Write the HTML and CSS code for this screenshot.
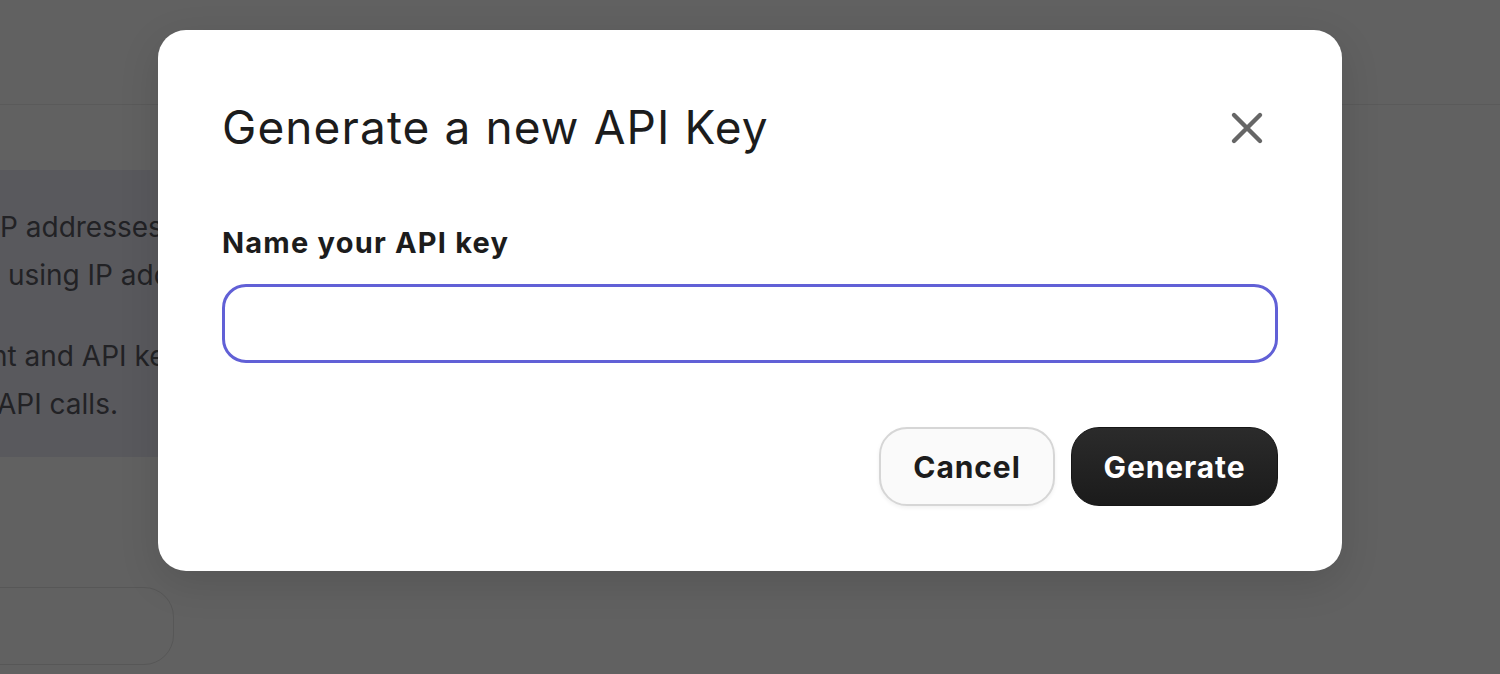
FILE: index.html
```html
<!DOCTYPE html>
<html lang="en">
<head>
<meta charset="utf-8">
<title>Generate a new API Key</title>
<link rel="stylesheet" href="styles.css">
</head>
<body>
<div class="page">
  <header class="topbar"></header>
  <main class="content">
    <section class="notice">
      <p class="notice-line">P addresses are allowed</p>
      <p class="notice-line"> using IP addresses</p>
      <p class="notice-line gap shift-a">nt and API keys</p>
      <p class="notice-line shift-b">API calls.</p>
    </section>
    <div class="ghost-input"></div>
  </main>
</div>

<div class="modal" role="dialog" aria-labelledby="modal-title">
  <div class="modal-head">
    <h1 id="modal-title" class="modal-title">Generate a new API Key</h1>
    <button class="close-btn" aria-label="Close">
      <svg width="34" height="34" viewBox="0 0 34 34" fill="none">
        <path d="M4 4 L30 30 M30 4 L4 30" stroke="#666666" stroke-width="4.4" stroke-linecap="round"/>
      </svg>
    </button>
  </div>
  <label class="field-label" for="key-name">Name your API key</label>
  <input id="key-name" class="field-input" type="text">
  <div class="actions">
    <button class="btn btn-cancel">Cancel</button>
    <button class="btn btn-generate">Generate</button>
  </div>
</div>
</body>
</html>
```

FILE: styles.css
```css
html, body {
  margin: 0;
  padding: 0;
}

body {
  width: 1500px;
  height: 674px;
  overflow: hidden;
  background: #616161;
  font-family: Inter, "Liberation Sans", sans-serif;
  position: relative;
}

.page {
  display: flex;
  flex-direction: column;
}

.topbar {
  height: 104px;
  border-bottom: 1px solid #5a5a5a;
}

.content {
  padding-top: 65px;
  display: flex;
  flex-direction: column;
}

.notice {
  width: 600px;
  height: 287px;
  background: #59595d;
  box-sizing: border-box;
  padding-top: 33px;
  color: #222225;
  font-size: 28px;
  line-height: 48px;
}

.notice-line {
  margin: 0;
  white-space: pre;
}

.notice-line.gap {
  margin-top: 33px;
}

.notice-line.shift-a {
  margin-left: -9px;
}

.notice-line.shift-b {
  margin-left: -3px;
}

.ghost-input {
  margin-top: 130px;
  margin-left: -40px;
  width: 212px;
  height: 76px;
  border: 1px solid #575757;
  border-radius: 30px;
}

.modal {
  position: absolute;
  left: 158px;
  top: 30px;
  width: 1184px;
  height: 541px;
  box-sizing: border-box;
  background: #ffffff;
  border-radius: 28px;
  box-shadow: 0 12px 40px rgba(0, 0, 0, 0.12);
  padding: 0 64px 0 64px;
  display: flex;
  flex-direction: column;
}

.modal-head {
  display: flex;
  align-items: center;
  justify-content: space-between;
  height: 196px;
}

.modal-title {
  margin: 0;
  margin-top: -2px;
  font-size: 46px;
  font-weight: 400;
  color: #1c1c1c;
  letter-spacing: 1.1px;
}

.close-btn {
  border: none;
  background: none;
  padding: 0;
  margin-right: 14px;
  width: 34px;
  height: 34px;
  display: flex;
  align-items: center;
  justify-content: center;
}

.field-label {
  font-size: 29px;
  font-weight: 700;
  color: #1c1c1c;
  line-height: 34px;
  letter-spacing: 1.2px;
}

.field-input {
  margin-top: 24px;
  height: 79px;
  box-sizing: border-box;
  border: 3px solid #6160d6;
  border-radius: 24px;
  outline: none;
  font-size: 26px;
  padding: 0 24px;
}

.actions {
  display: flex;
  justify-content: flex-end;
  gap: 16px;
  margin-top: 64px;
}

.btn {
  height: 79px;
  box-sizing: border-box;
  border-radius: 28px;
  font-family: Inter, "Liberation Sans", sans-serif;
  font-size: 30px;
  font-weight: 700;
  padding: 0;
  letter-spacing: 0.9px;
}

.btn-cancel {
  width: 176px;
  background: #fafafa;
  border: 2px solid #d6d6d6;
  color: #1c1c1c;
  box-shadow: 0 2px 4px rgba(0, 0, 0, 0.06);
}

.btn-generate {
  width: 207px;
  background: linear-gradient(#2b2b2b, #1b1b1b);
  border: 1px solid #161616;
  color: #ffffff;
}
```
